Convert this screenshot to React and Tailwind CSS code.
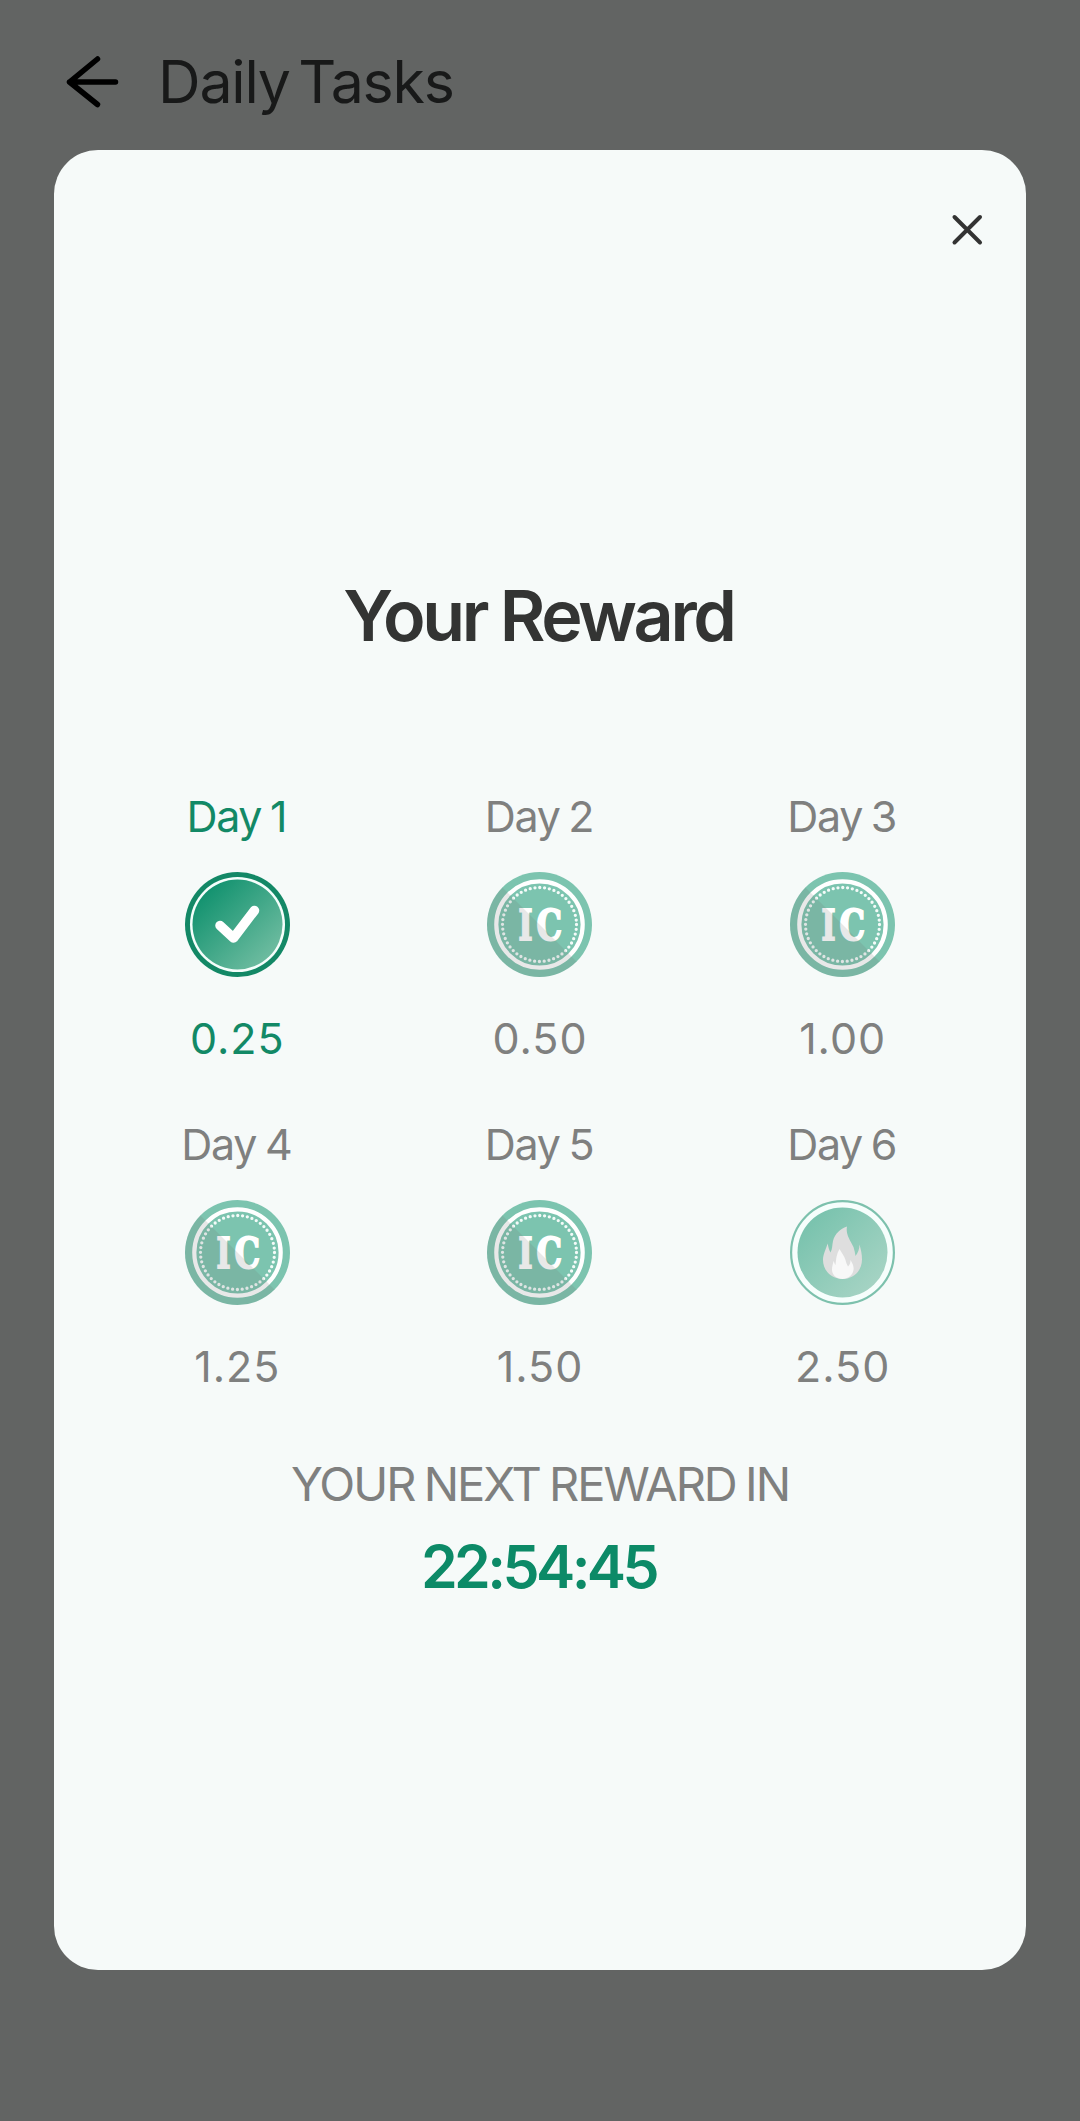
import clsx from "clsx";

const rewards = [
  { day: 1, amount: "0.25", type: "claimed" },
  { day: 2, amount: "0.50", type: "coin" },
  { day: 3, amount: "1.00", type: "coin" },
  { day: 4, amount: "1.25", type: "coin" },
  { day: 5, amount: "1.50", type: "coin" },
  { day: 6, amount: "2.50", type: "bonus" },
];

function ClaimedIcon() {
  return (
    <svg viewBox="0 0 105 105" className="size-[105px]">
      <defs>
        <linearGradient id="claimed" x1="0.15" y1="0.15" x2="0.85" y2="0.85">
          <stop offset="0" stopColor="#149370" />
          <stop offset="1" stopColor="#6cbb9f" />
        </linearGradient>
      </defs>
      <circle cx="52.5" cy="52.5" r="52.5" fill="#138866" />
      <circle cx="52.5" cy="52.5" r="47.5" fill="#f4fefb" />
      <circle cx="52.5" cy="52.5" r="45" fill="url(#claimed)" />
      <path
        d="M35 53.5L48.5 66L69.5 38.5"
        fill="none"
        stroke="#fff"
        strokeWidth="9.5"
        strokeLinecap="round"
        strokeLinejoin="round"
      />
    </svg>
  );
}

function CoinIcon() {
  return (
    <svg viewBox="0 0 105 105" className="size-[105px]">
      <defs>
        <clipPath id="coin">
          <circle cx="52.5" cy="52.5" r="52.5" />
        </clipPath>
      </defs>
      <circle cx="52.5" cy="52.5" r="52.5" fill="#7cc4af" />
      <circle cx="52.5" cy="52.5" r="43.2" fill="none" stroke="#fff" strokeWidth="4.2" />
      <circle
        cx="52.5"
        cy="52.5"
        r="37"
        fill="none"
        stroke="#f4fbf9"
        strokeWidth="3.3"
        strokeLinecap="round"
        strokeDasharray="0 4.843"
      />
      <g
        fill="#fff"
        stroke="#fff"
        strokeWidth="2"
        className="font-['DejaVu_Serif',serif] text-[42px] font-bold"
      >
        <text x="31.5" y="67.8" textLength="14" lengthAdjust="spacingAndGlyphs">
          I
        </text>
        <text x="49.5" y="67.8" textLength="25.5" lengthAdjust="spacingAndGlyphs">
          C
        </text>
      </g>
      <path d="M0 0L105 105H0Z" fill="#6e6e6e" fillOpacity="0.16" clipPath="url(#coin)" />
    </svg>
  );
}

function FireIcon() {
  return (
    <svg viewBox="0 0 105 105" className="size-[105px]">
      <defs>
        <linearGradient id="fire" x1="0.15" y1="0.15" x2="0.85" y2="0.85">
          <stop offset="0" stopColor="#7ac3ae" />
          <stop offset="1" stopColor="#a4d3c3" />
        </linearGradient>
      </defs>
      <circle cx="52.5" cy="52.5" r="51.4" fill="#f6fefc" stroke="#7dc1ad" strokeWidth="2.2" />
      <circle cx="52.5" cy="52.5" r="45" fill="url(#fire)" />
      <path
        d="M57 26.5C55.5 34 60 40 63.5 47C64.5 50 65 53 65.5 56C68 53 69.5 49 69.5 44.5C71 50 72 54 72 59.5C72 71 63.5 79 52.5 79C41.5 79 33 70.5 33 60C33 54 36 49.5 37.5 43.5C38.5 47 39 50 40.5 52.5C42.5 49 42 45.5 43 41C45 33.5 50 29 57 26.5Z"
        fill="#dedede"
      />
      <path
        d="M49.5 49C51.5 53 54.5 56 55.5 60C56 62.5 57 64.5 58 66.5C60 64.5 60.5 62.5 60.5 60C63 64 64 67 63.5 70C62.5 75.5 58 79 52.5 79C46.5 79 42 75 42 69.5C42 66.5 43 64 43.5 61C44.5 62.5 44.5 64 45.5 65C46 59 46.5 54 49.5 49Z"
        fill="#f8f8f8"
      />
    </svg>
  );
}

const icons = {
  claimed: ClaimedIcon,
  coin: CoinIcon,
  bonus: FireIcon,
};

function Reward({ day, amount, type }) {
  const Icon = icons[type];

  return (
    <div
      className={clsx(
        "flex flex-col items-center",
        type === "claimed" ? "text-[#128966]" : "text-[#7f807f]"
      )}
    >
      <span className="pr-[2px] text-[43px] leading-[52px] tracking-[-1.3px] [word-spacing:-2px]">
        Day {day}
      </span>
      <div className="mt-[30px] mb-[35px]">
        <Icon />
      </div>
      <span className="text-[43px] leading-[52px] tracking-[1px]">{amount}</span>
    </div>
  );
}

export default function App() {
  return (
    <div className="flex h-[2121px] w-[1080px] flex-col bg-[#626463] font-['Inter',sans-serif]">
      {/* Page header behind the dialog */}
      <header className="flex h-[150px] shrink-0 items-center pl-16 pt-[13px]">
        <svg
          viewBox="0 0 58 58"
          className="size-[58px]"
          fill="none"
          stroke="#000"
          strokeWidth="5.5"
          strokeLinecap="round"
          strokeLinejoin="round"
        >
          <path d="M51.5 29H5.5M33.5 6L5.5 29L33.5 51.5" />
        </svg>
        <h1 className="ml-[36px] text-[59px] leading-[72px] tracking-[-1.2px] text-[#181919] [word-spacing:-7px]">
          Daily Tasks
        </h1>
      </header>

      {/* Reward dialog */}
      <main className="mx-[54px] flex h-[1820px] flex-col items-center rounded-[44px] bg-[#f6faf9] px-8">
        <button className="mt-[62px] mr-[8px] self-end">
          <svg
            viewBox="0 0 36 36"
            className="size-[36px]"
            fill="none"
            stroke="#333"
            strokeWidth="4"
            strokeLinecap="round"
          >
            <path d="M4.5 5L30 30.5M30 5L4.5 30.5" />
          </svg>
        </button>

        <h2 className="mt-[326px] pr-[3px] text-[70px] leading-[84px] font-semibold tracking-[-3.3px] text-[#333433] [word-spacing:-1px]">
          Your Reward
        </h2>

        <div className="mt-[132px] grid w-full grid-cols-3 gap-y-[54px]">
          {rewards.map((reward) => (
            <Reward key={reward.day} {...reward} />
          ))}
        </div>

        <p className="mt-[63px] text-[47px] leading-[58px] tracking-[-2px] text-[#7f807f] [word-spacing:-2px]">
          YOUR NEXT REWARD IN
        </p>
        <p className="mt-[18px] pr-[3px] text-[59px] leading-[72px] font-semibold tracking-[-3.6px] text-[#0c8a67]">
          22:54:45
        </p>
      </main>
    </div>
  );
}
